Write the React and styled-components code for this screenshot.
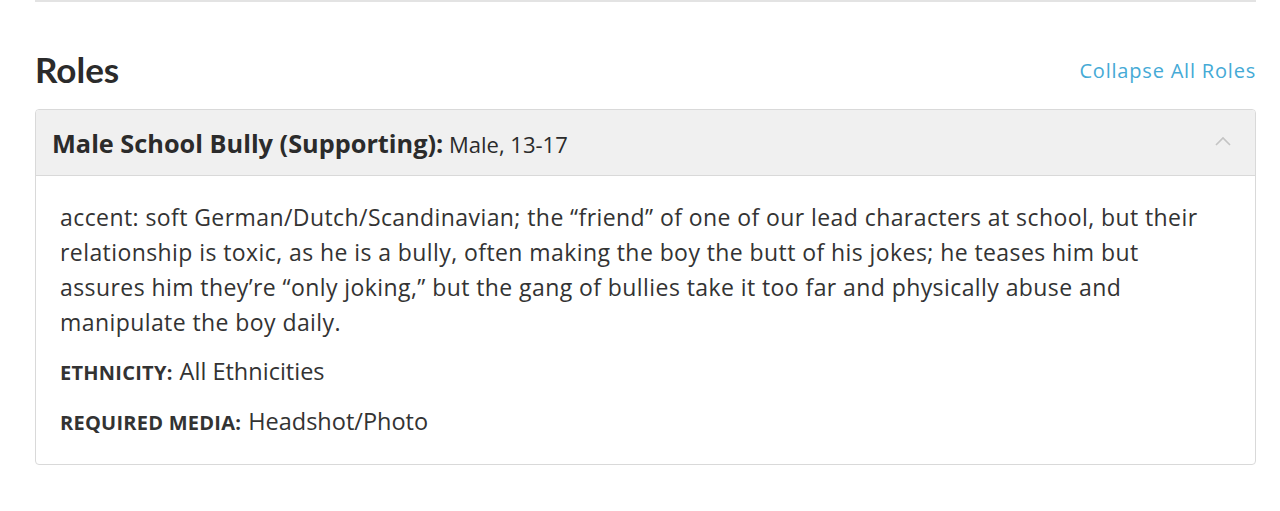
import React, { useState } from 'react';
import styled, { createGlobalStyle } from 'styled-components';

const GlobalStyle = createGlobalStyle`
  body {
    margin: 0;
    background: #fff;
    font-family: "Open Sans", Lato, Arial, sans-serif;
    color: #333;
  }
`;

const Page = styled.div`
  padding: 0 24px 0 35px;
`;

const Divider = styled.hr`
  margin: 0;
  height: 3px;
  border: 0;
  border-top: 2px solid #e3e3e3;
  width: 1221px;
`;

const SectionHeader = styled.div`
  display: flex;
  align-items: flex-start;
  justify-content: space-between;
  width: 1221px;
  margin-top: 44px;
  margin-bottom: 19px;

  h2 {
    margin: 0;
    font-family: Lato, sans-serif;
    font-size: 35px;
    font-weight: 700;
    color: #2b2b2b;
    line-height: 41px;
  }
`;

const CollapseLink = styled.a`
  margin-top: 10px;
  color: #45aad6;
  font-size: 20px;
  line-height: 24px;
  letter-spacing: 0.8px;
  text-decoration: none;
  cursor: pointer;
`;

const RoleCard = styled.div`
  width: 1219px;
  border: 1px solid #d9d9d9;
  border-radius: 4px;
  overflow: hidden;
`;

const RoleHeader = styled.div`
  display: flex;
  align-items: center;
  justify-content: space-between;
  height: 65px;
  padding: 0 23px 0 16px;
  background: #f0f0f0;
  border-bottom: 1px solid #d9d9d9;
  cursor: pointer;
`;

const RoleTitle = styled.div`
  font-size: 22px;
  color: #2b2b2b;
  padding-top: 1px;

  strong {
    font-size: 25.3px;
    font-weight: 700;
  }
`;

const Chevron = styled.svg`
  width: 18px;
  height: 18px;
  margin-top: -2px;
  transform: rotate(${({ $open }) => ($open ? 0 : 180)}deg);
`;

const RoleBody = styled.div`
  padding: 24px 24px 18px 24px;
`;

const Description = styled.p`
  margin: 0 0 6px;
  max-width: 1155px;
  font-size: 23px;
  letter-spacing: 0.42px;
  line-height: 35px;
  color: #333;
`;

const Detail = styled.div`
  height: 50px;
  font-size: 23.5px;
  line-height: 50px;
  color: #333;

  b {
    font-size: 20px;
    line-height: 1;
    letter-spacing: 0.25px;
    font-weight: 700;
    text-transform: uppercase;
    margin-right: 7px;
  }
`;

const App = () => {
  const [open, setOpen] = useState(true);

  return (
    <Page>
      <GlobalStyle />
      <Divider />
      <SectionHeader>
        <h2>Roles</h2>
        <CollapseLink onClick={() => setOpen(!open)}>
          {open ? 'Collapse All Roles' : 'Expand All Roles'}
        </CollapseLink>
      </SectionHeader>

      <RoleCard>
        <RoleHeader onClick={() => setOpen(!open)}>
          <RoleTitle>
            <strong>Male School Bully (Supporting):</strong> Male, 13-17
          </RoleTitle>
          <Chevron $open={open} viewBox="0 0 18 18" fill="none">
            <path d="M2 12 L9 5 L16 12" stroke="#c4c4c4" strokeWidth="1.6" />
          </Chevron>
        </RoleHeader>

        {open && (
          <RoleBody>
            <Description>
              accent: soft German/Dutch/Scandinavian; the “friend” of one of our lead characters at
              school, but their relationship is toxic, as he is a bully, often making the boy the
              butt of his jokes; he teases him but assures him they’re “only joking,” but the gang
              of bullies take it too far and physically abuse and manipulate the boy daily.
            </Description>
            <Detail>
              <b>Ethnicity:</b>All Ethnicities
            </Detail>
            <Detail>
              <b>Required Media:</b>Headshot/Photo
            </Detail>
          </RoleBody>
        )}
      </RoleCard>
    </Page>
  );
};

export default App;
